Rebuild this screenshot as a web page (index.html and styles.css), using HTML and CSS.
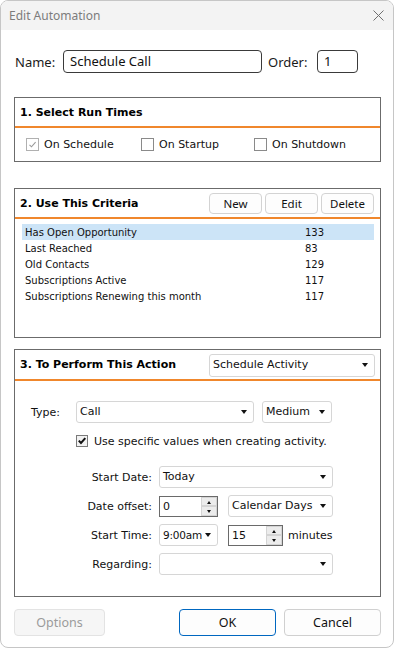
FILE: index.html
```html
<!DOCTYPE html>
<html lang="en">
<head>
    <meta charset="UTF-8">
    <meta name="viewport" content="width=device-width, initial-scale=1.0">
    <title>Edit Automation</title>
    <link rel="stylesheet" href="styles.css">
</head>
<body>

    <div class="window">
        <div class="titlebar">
            <span class="title">Edit Automation</span>
            <svg class="close" width="11" height="11" viewBox="0 0 11 11">
                <path d="M0.5 0.5 L10.5 10.5 M10.5 0.5 L0.5 10.5" stroke="#6f6f6f" stroke-width="1" fill="none"/>
            </svg>
        </div>

        <div class="content">
            <div class="name-row">
                <span class="name-label">Name:</span>
                <div class="text-field name-field">Schedule Call</div>
                <span class="order-label">Order:</span>
                <div class="text-field order-field">1</div>
            </div>

            <div class="group run-times">
                <div class="group-head">
                    <h2>1. Select Run Times</h2>
                </div>
                <div class="checks">
                    <div class="check-item first">
                        <span class="box disabled">
                            <svg width="11" height="11" viewBox="0 0 11 11"><path d="M2.5 5.8 L4.5 7.8 L8.6 3.2" stroke="#9a9a9a" stroke-width="1.1" fill="none"/></svg>
                        </span>
                        On Schedule
                    </div>
                    <div class="check-item second">
                        <span class="box"></span>
                        On Startup
                    </div>
                    <div class="check-item">
                        <span class="box"></span>
                        On Shutdown
                    </div>
                </div>
            </div>

            <div class="group criteria">
                <div class="group-head">
                    <h2>2. Use This Criteria</h2>
                    <div class="head-buttons">
                        <button class="small-btn">New</button>
                        <button class="small-btn">Edit</button>
                        <button class="small-btn">Delete</button>
                    </div>
                </div>
                <div class="list">
                    <div class="list-row selected"><span class="list-name">Has Open Opportunity</span><span>133</span></div>
                    <div class="list-row"><span class="list-name">Last Reached</span><span>83</span></div>
                    <div class="list-row"><span class="list-name">Old Contacts</span><span>129</span></div>
                    <div class="list-row"><span class="list-name">Subscriptions Active</span><span>117</span></div>
                    <div class="list-row"><span class="list-name">Subscriptions Renewing this month</span><span>117</span></div>
                </div>
            </div>

            <div class="group action">
                <div class="group-head tall">
                    <h2>3. To Perform This Action</h2>
                    <div class="dropdown action-select">Schedule Activity<span class="arrow"></span></div>
                </div>
                <div class="action-body">
                    <div class="type-row">
                        <span class="type-label">Type:</span>
                        <div class="dropdown type-select">Call<span class="arrow"></span></div>
                        <div class="dropdown priority-select">Medium<span class="arrow"></span></div>
                    </div>

                    <div class="specific-row">
                        <span class="box classic">
                            <svg width="10" height="10" viewBox="0 0 10 10"><path d="M1.8 4.6 L4 7 L8.3 2.2" stroke="#111" stroke-width="2" fill="none"/></svg>
                        </span>
                        Use specific values when creating activity.
                    </div>

                    <div class="form-row">
                        <span class="form-label">Start Date:</span>
                        <div class="dropdown wide">Today<span class="arrow"></span></div>
                    </div>
                    <div class="form-row">
                        <span class="form-label">Date offset:</span>
                        <div class="spin offset-spin">
                            <span class="spin-val">0</span>
                            <div class="spin-btns"><span class="spin-up"></span><span class="spin-down"></span></div>
                        </div>
                        <div class="dropdown days-select">Calendar Days<span class="arrow"></span></div>
                    </div>
                    <div class="form-row">
                        <span class="form-label">Start Time:</span>
                        <div class="dropdown time-select">9:00am<span class="arrow"></span></div>
                        <div class="spin minutes-spin">
                            <span class="spin-val">15</span>
                            <div class="spin-btns"><span class="spin-up"></span><span class="spin-down"></span></div>
                        </div>
                        <span class="minutes">minutes</span>
                    </div>
                    <div class="form-row">
                        <span class="form-label">Regarding:</span>
                        <div class="dropdown wide"><span class="arrow"></span></div>
                    </div>
                </div>
            </div>

            <div class="footer">
                <button class="dlg-btn disabled">Options</button>
                <button class="dlg-btn ok">OK</button>
                <button class="dlg-btn">Cancel</button>
            </div>
        </div>
    </div>

</body>
</html>
```

FILE: styles.css
```css
body {
    margin: 0;
    background-color: #ffffff;
    font-family: "Noto Sans", sans-serif;
    color: #1a1a1a;
}

.window {
    width: 394px;
    height: 648px;
    box-sizing: border-box;
    border: 1px solid #c6c6c6;
    border-radius: 8px;
    overflow: hidden;
    background-color: #ffffff;
}

.titlebar {
    height: 29px;
    background-color: #f3f3f3;
    display: flex;
    align-items: center;
    justify-content: space-between;
    padding: 0 9px 0 8px;
}

.title {
    font-size: 12px;
    color: #7c7c7c;
}

.content {
    padding: 0 12px 0 13px;
}

/* name / order */
.name-row {
    margin-top: 20px;
    height: 23px;
    display: flex;
    align-items: center;
    font-size: 13px;
}

.name-label {
    width: 49px;
    padding-left: 1px;
    box-sizing: border-box;
}

.order-label {
    width: 49px;
    margin-left: 6px;
}

.text-field {
    height: 23px;
    box-sizing: border-box;
    border: 1px solid #3a3a3a;
    border-radius: 4px;
    padding: 0 6px;
    line-height: 21px;
    font-size: 13px;
    color: #111;
}

.name-field {
    width: 199px;
}

.order-field {
    width: 41px;
}

/* group boxes */
.group {
    border: 1px solid #6b6b6b;
    font-family: "DejaVu Sans", sans-serif;
    font-size: 10px;
    color: #111;
}

.run-times {
    margin-top: 24px;
}

.criteria {
    margin-top: 26px;
}

.action {
    margin-top: 11px;
}

.group-head {
    height: 28px;
    border-bottom: 2px solid #f0872c;
    display: flex;
    align-items: center;
    justify-content: space-between;
    padding: 0 5px 0 5px;
}

.group-head.tall {
    height: 29px;
}

.group-head h2 {
    margin: 0;
    font-size: 11px;
    font-weight: bold;
    color: #000;
}

/* checkboxes */
.checks {
    height: 33px;
    display: flex;
    align-items: center;
    padding-left: 11px;
    font-size: 11px;
}

.check-item {
    display: flex;
    align-items: center;
    gap: 5px;
}

.check-item.first {
    width: 115px;
}

.check-item.second {
    width: 113px;
}

.box {
    width: 13px;
    height: 13px;
    box-sizing: border-box;
    border: 1px solid #8a8a8a;
    background-color: #fff;
    display: flex;
    align-items: center;
    justify-content: center;
}

.box.disabled {
    border-color: #b0b0b0;
}

.box.classic {
    width: 12px;
    height: 12px;
    border-color: #7a7a7a;
    background-color: #f2f2f2;
}

/* criteria list */
.head-buttons {
    display: flex;
    gap: 3px;
    margin-right: 1px;
}

.small-btn {
    width: 53px;
    height: 21px;
    padding: 0;
    background-color: #fdfdfd;
    border: 1px solid #d3d3d3;
    border-radius: 4px;
    font-family: "Noto Sans", sans-serif;
    font-size: 11.5px;
    color: #111;
}

.list {
    height: 118px;
    box-sizing: border-box;
    padding: 5px 6px 0 7px;
}

.list-row {
    height: 16px;
    display: flex;
    align-items: center;
    padding-left: 3px;
}

.list-row.selected {
    background-color: #cce4f7;
}

.list-name {
    width: 280px;
}

/* dropdowns */
.dropdown {
    position: relative;
    height: 22px;
    box-sizing: border-box;
    border: 1px solid #d6d6d6;
    border-radius: 3px;
    background-color: #fff;
    padding: 0 16px 0 3px;
    line-height: 20px;
    font-size: 11px;
    white-space: nowrap;
}

.arrow {
    position: absolute;
    right: 6px;
    top: 8px;
    width: 0;
    height: 0;
    border-left: 3.5px solid transparent;
    border-right: 3.5px solid transparent;
    border-top: 4px solid #111;
}

.action-select {
    width: 166px;
    height: 23px;
    margin-top: 2px;
    font-size: 11px;
}

/* action body */
.action-body {
    padding: 20px 0 21px 0;
    font-size: 11px;
}

.type-row {
    display: flex;
    align-items: center;
    padding-left: 16px;
}

.type-label {
    width: 45px;
}

.type-select {
    width: 178px;
}

.priority-select {
    width: 70px;
    margin-left: 8px;
}

.specific-row {
    height: 20px;
    margin-top: 8px;
    padding-left: 61px;
    display: flex;
    align-items: center;
    gap: 6px;
}

.form-row {
    height: 22px;
    margin-top: 7px;
    display: flex;
    align-items: center;
}

.specific-row + .form-row {
    margin-top: 15px;
}

.form-label {
    width: 137px;
    text-align: right;
    margin-right: 7px;
}

.wide {
    width: 174px;
}

.days-select {
    width: 105px;
    margin-left: 10px;
}

.time-select {
    width: 59px;
    padding-right: 14px;
    font-size: 10.5px;
    letter-spacing: -0.2px;
}

/* spin boxes */
.spin {
    height: 21px;
    box-sizing: border-box;
    border: 1px solid #6a6a6a;
    display: flex;
    background-color: #fff;
}

.offset-spin {
    width: 59px;
}

.minutes-spin {
    width: 55px;
    margin-left: 10px;
}

.spin-val {
    flex: 1;
    padding-left: 3px;
    line-height: 19px;
}

.spin-btns {
    width: 16px;
    display: flex;
    flex-direction: column;
}

.spin-up,
.spin-down {
    flex: 1;
    position: relative;
    background-color: #ececec;
    border: 1px solid #d4d4d4;
}

.spin-up::after,
.spin-down::after {
    content: "";
    position: absolute;
    left: 5px;
    top: 3px;
    border-left: 2.5px solid transparent;
    border-right: 2.5px solid transparent;
}

.spin-up::after {
    border-bottom: 3px solid #111;
}

.spin-down::after {
    border-top: 3px solid #111;
}

.minutes {
    margin-left: 5px;
}

/* footer */
.footer {
    margin-top: 12px;
    display: flex;
    gap: 8px;
}

.dlg-btn {
    width: 97px;
    height: 27px;
    padding: 0;
    background-color: #fdfdfd;
    border: 1px solid #d0d0d0;
    border-radius: 4px;
    font-family: "Noto Sans", sans-serif;
    font-size: 12.5px;
    color: #111;
}

.dlg-btn.disabled {
    width: 91px;
    margin-right: auto;
    background-color: #f6f6f6;
    border-color: #e3e3e3;
    color: #9b9b9b;
}

.dlg-btn.ok {
    border-color: #0067c0;
}
```
